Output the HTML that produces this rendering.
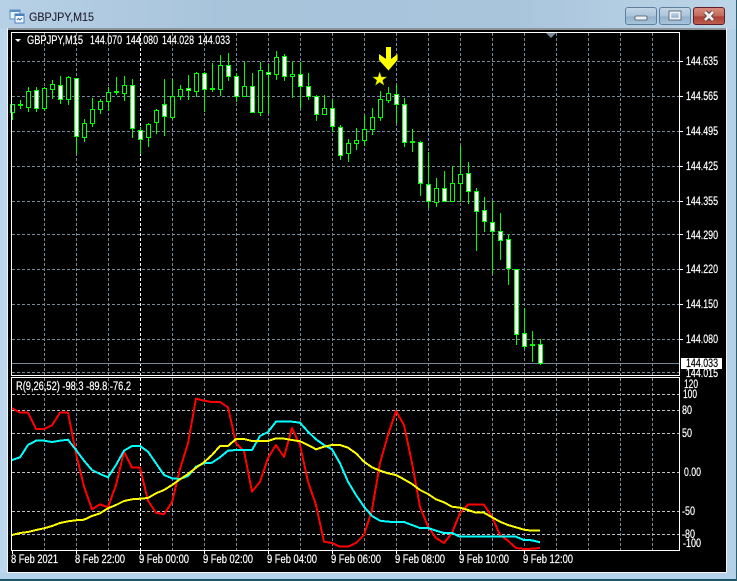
<!DOCTYPE html>
<html>
<head>
<meta charset="utf-8">
<style>
html,body{margin:0;padding:0;background:#b9d2e6;width:737px;height:581px;overflow:hidden}
svg{display:block;position:absolute;left:0;top:0}
text{font-family:"Liberation Sans",sans-serif;font-size:11.5px;fill:#fff;stroke:#fff;stroke-width:.2px}
.t{font-size:12px;fill:#1c1c2c;stroke:#1c1c2c;stroke-width:.1px}
.k{fill:#000;stroke:#000}
</style>
</head>
<body>
<svg width="737" height="581" viewBox="0 0 737 581" xmlns="http://www.w3.org/2000/svg">
<defs>
<linearGradient id="tb" x1="0" y1="0" x2="1" y2="0"><stop offset="0" stop-color="#b7d0e6"/><stop offset=".3" stop-color="#a8c4db"/><stop offset=".7" stop-color="#a9c5dc"/><stop offset="1" stop-color="#bdd5e8"/></linearGradient>
<linearGradient id="bn" x1="0" y1="0" x2="0" y2="1"><stop offset="0" stop-color="#c3d6e6"/><stop offset=".5" stop-color="#aac4db"/><stop offset=".55" stop-color="#92b0cb"/><stop offset="1" stop-color="#a9c6de"/></linearGradient>
<linearGradient id="cl" x1="0" y1="0" x2="0" y2="1"><stop offset="0" stop-color="#d98e80"/><stop offset=".5" stop-color="#c46a5a"/><stop offset=".55" stop-color="#ab4034"/><stop offset="1" stop-color="#bf6050"/></linearGradient>
</defs>
<!-- window frame -->
<rect width="737" height="581" fill="url(#tb)"/>
<rect x="0" y="29" width="8" height="552" fill="#bcd6ee"/>
<rect x="727" y="29" width="9" height="552" fill="#b6d0e8"/>
<rect x="0" y="573" width="737" height="6" fill="#b6d2ea"/>
<rect x="0" y="579" width="737" height="2" fill="#1d5566"/>
<rect x="736" y="0" width="1" height="581" fill="#2a5f70"/>
<rect x="7" y="28" width="720" height="545" fill="#f2f5f8"/>
<rect x="8" y="28" width="718" height="2" fill="#8b9298"/>
<rect x="8" y="30" width="718" height="542" fill="#000"/>
<!-- title icon -->
<g shape-rendering="crispEdges">
<rect x="10" y="10" width="10" height="9" fill="#eaf3fb" stroke="#5b8fc9"/>
<rect x="10" y="10" width="10" height="2" fill="#5b8fc9"/>
<rect x="15" y="14" width="9" height="9" fill="#f4f9fd" stroke="#4a80c0"/>
<rect x="15" y="14" width="9" height="2" fill="#4a80c0"/>
</g>
<path d="M17 20l1.500-1.500 1.500 1.500 2-2" fill="none" stroke="#3a70b0"/>
<text class="t" x="29" y="21" textLength="65" lengthAdjust="spacingAndGlyphs">GBPJPY,M15</text>
<!-- buttons -->
<rect x="625.500" y="7.500" width="31" height="17" rx="2.500" fill="url(#bn)" stroke="#5f7f9b"/>
<rect x="635" y="16" width="12" height="4" rx="1" fill="#eef2f6" stroke="#46525f" stroke-width=".8"/>
<rect x="659.500" y="7.500" width="31" height="17" rx="2.500" fill="url(#bn)" stroke="#5f7f9b"/>
<rect x="670" y="12" width="10" height="7" fill="none" stroke="#eef2f6" stroke-width="2.500"/>
<rect x="669" y="11" width="12" height="9" fill="none" stroke="#46525f" stroke-width=".8"/>
<rect x="693.500" y="7.500" width="31" height="17" rx="2.500" fill="url(#cl)" stroke="#5d2028"/>
<path d="M705 12l8 8M713 12l-8 8" stroke="#4c3a3c" stroke-width="4.500"/>
<path d="M705 12l8 8M713 12l-8 8" stroke="#f1eeee" stroke-width="2.800"/>
<!-- plot frames -->
<g shape-rendering="crispEdges">
<g fill="none" stroke="#778899" stroke-dasharray="3 2">
<path d="M12 61.500H679M12 96.500H679M12 131.500H679M12 166.500H679M12 201.500H679M12 234.500H679M12 269.500H679M12 304.500H679M12 339.500H679M12 372.500H679"/>
<path d="M44.500 33V375M76.500 33V375M108.500 33V375M172.500 33V375M204.500 33V375M236.500 33V375M268.500 33V375M300.500 33V375M332.500 33V375M364.500 33V375M396.500 33V375M428.500 33V375M460.500 33V375M492.500 33V375M524.500 33V375M556.500 33V375M588.500 33V375M620.500 33V375M652.500 33V375"/>
<path d="M44.500 378V550M76.500 378V550M108.500 378V550M172.500 378V550M204.500 378V550M236.500 378V550M268.500 378V550M300.500 378V550M332.500 378V550M364.500 378V550M396.500 378V550M428.500 378V550M460.500 378V550M492.500 378V550M524.500 378V550M556.500 378V550M588.500 378V550M620.500 378V550M652.500 378V550"/>
</g>
<path d="M12 394.500H679M12 410.500H679M12 433.500H679M12 472.500H679M12 511.500H679M12 534.500H679" fill="none" stroke="#c0c0c0" stroke-dasharray="3 2"/>
<path d="M140.500 33V375M140.500 378V550" fill="none" stroke="#fff" stroke-dasharray="3 2"/>
<rect x="12" y="363" width="667" height="1" fill="#778899"/>
<!-- wicks -->
<path fill="none" stroke="#00ff00" d="M12.500 104V120M20.500 100V109M28.500 87V112M36.500 87V112M44.500 87V111M52.500 80V99M60.500 76V104M68.500 76V105M76.500 78V154M84.500 119V142M92.500 98V127M100.500 99V114M108.500 87V111M116.500 77V95M124.500 76V101M132.500 79V138M140.500 127V154M148.500 123V147M156.500 109V134M164.500 79V136M172.500 79V119M180.500 85V100M188.500 75V100M196.500 72V97M204.500 72V112M212.500 63V92M220.500 55V96M228.500 53V81M236.500 73V102M244.500 62V96M252.500 73V113M260.500 62V116M268.500 64V114M276.500 51V80M284.500 54V81M292.500 62V98M300.500 62V108M308.500 73V100M316.500 95V121M324.500 95V114M332.500 99V132M340.500 125V160M348.500 139V162M356.500 128V150M364.500 115V146M372.500 108V135M380.500 91V121M388.500 87V103M396.500 85V123M404.500 98V147M412.500 129V152M420.500 141V196M428.500 152V208M436.500 178V207M444.500 171V201M452.500 166V201M460.500 146V202M468.500 162V204M476.500 188V251M484.500 197V232M492.500 201V274M500.500 213V260M508.500 234V285M516.500 269V345M524.500 308V349M532.500 331V362M540.500 339V365"/>
<!-- doji -->
<path fill="none" stroke="#00ff00" stroke-width="2" d="M18 105H23M114 92H119M210 89H215M410 142H415M530 345H535"/>
<!-- hollow bodies -->
<path fill="#000" stroke="#00ff00" d="M10.500 104.500h4V112.500h-4zM26.500 91.500h4V107.500h-4zM42.500 88.500h4V108.500h-4zM50.500 84.500h4V89.500h-4zM66.500 77.500h4V99.500h-4zM82.500 123.500h4V137.500h-4zM90.500 109.500h4V123.500h-4zM98.500 101.500h4V109.500h-4zM106.500 92.500h4V101.500h-4zM122.500 85.500h4V93.500h-4zM146.500 124.500h4V137.500h-4zM154.500 110.500h4V122.500h-4zM170.500 96.500h4V117.500h-4zM178.500 89.500h4V96.500h-4zM194.500 73.500h4V91.500h-4zM218.500 65.500h4V89.500h-4zM242.500 86.500h4V96.500h-4zM258.500 70.500h4V112.500h-4zM274.500 57.500h4V74.500h-4zM290.500 74.500h4V76.500h-4zM322.500 108.500h4V114.500h-4zM346.500 143.500h4V153.500h-4zM354.500 140.500h4V143.500h-4zM362.500 129.500h4V140.500h-4zM370.500 117.500h4V129.500h-4zM378.500 99.500h4V117.500h-4zM386.500 93.500h4V100.500h-4zM434.500 188.500h4V202.500h-4zM450.500 183.500h4V201.500h-4zM458.500 174.500h4V183.500h-4z"/>
<!-- filled bodies -->
<path fill="#fff" stroke="#00ff00" d="M34.500 90.500h4V108.500h-4zM58.500 85.500h4V99.500h-4zM74.500 78.500h4V136.500h-4zM130.500 85.500h4V128.500h-4zM138.500 130.500h4V139.500h-4zM162.500 104.500h4V116.500h-4zM186.500 88.500h4V90.500h-4zM202.500 73.500h4V89.500h-4zM226.500 65.500h4V76.500h-4zM234.500 76.500h4V96.500h-4zM250.500 86.500h4V112.500h-4zM266.500 72.500h4V74.500h-4zM282.500 56.500h4V76.500h-4zM298.500 74.500h4V86.500h-4zM306.500 86.500h4V96.500h-4zM314.500 96.500h4V114.500h-4zM330.500 108.500h4V126.500h-4zM338.500 127.500h4V155.500h-4zM394.500 94.500h4V104.500h-4zM402.500 104.500h4V142.500h-4zM418.500 142.500h4V183.500h-4zM426.500 184.500h4V201.500h-4zM442.500 188.500h4V201.500h-4zM466.500 173.500h4V191.500h-4zM474.500 191.500h4V211.500h-4zM482.500 210.500h4V221.500h-4zM490.500 222.500h4V231.500h-4zM498.500 231.500h4V240.500h-4zM506.500 239.500h4V268.500h-4zM514.500 269.500h4V334.500h-4zM522.500 333.500h4V346.500h-4zM538.500 344.500h4V363.500h-4z"/>
</g>
<!-- indicator lines -->
<g fill="none" stroke-width="2" stroke-linejoin="round" shape-rendering="crispEdges">
<polyline stroke="#ff0000" points="12,408 20,412.700 28,412.700 36,429 44,429 52,425.300 60,412.700 68,412.700 76,453.300 84,486.700 92,509.300 100,504.300 108,507.300 116,485 124,451.700 132,467.700 140,467.700 148,500.700 156,512.700 164,514.300 172,502.300 180,469 188,443.300 196,398.700 204,400.700 212,402 220,402 228,407.300 236,443.300 244,451 252,491.700 260,481.700 268,458 276,445 284,457 292,428 300,445 308,481.700 316,505 324,541.700 332,543 340,546.700 348,546.700 356,543 364,535 372,510 380,463 388,435 396,411 404,425 412,463 420,506.700 428,526.700 436,538 444,543 452,533 460,513 468,504.700 476,504.700 484,504.700 492,516.700 500,535 508,540.700 516,548 524,549 532,548.700 540,548"/>
<polyline stroke="#00ffff" points="12,460 20,457.300 28,445 36,440.700 44,440.700 52,442 60,440.700 68,439.700 76,450 84,460.700 92,470 100,474 108,477.300 116,465 124,450.700 132,446 140,446 148,451.700 156,463.300 164,475 172,478.300 180,479 188,476 196,466.700 204,463.300 212,462.700 220,457.300 228,450.700 236,450 244,450 252,450 260,436 268,432 276,421.700 284,421.700 292,421.700 300,422.700 308,431.700 316,439.300 324,445 332,449.300 340,463.300 348,481.700 356,495 364,506.700 372,516 380,520.700 388,521.700 396,522 404,522 412,525 420,528 428,528 436,530.700 444,533 452,533 460,536.700 468,536.700 476,536.700 484,536.700 492,536.700 500,536.700 508,536.700 516,536.700 524,540 532,540.300 540,542.300"/>
<polyline stroke="#ffff00" points="12,535 20,533 28,532 36,530 44,528.300 52,526 60,523 68,521.300 76,520.300 84,519.700 92,516 100,513.300 108,508.300 116,505 124,501 132,499.300 140,498.700 148,498 156,493.300 164,490 172,485 180,479.300 188,474 196,467.700 204,462.300 212,455 220,446 228,446 236,439 244,439 252,441 260,441 268,441 276,438.300 284,438.700 292,440 300,441.300 308,445 316,449.300 324,446.700 332,445 340,445 348,447.700 356,453.300 364,461.700 372,467.300 380,470.700 388,473.300 396,475 404,479.300 412,484 420,490 428,494 436,499.300 444,502.300 452,506.700 460,507.700 468,510 476,512.700 484,512.700 492,517.300 500,521.700 508,525 516,527.300 524,529.700 532,530.700 540,530.700"/>
</g>
<!-- arrow and star -->
<polygon fill="#ffff00" points="386,47 391,47 391,59 397.500,54 397.500,60 388.500,70.500 379,60 379,54 386,59"/>
<polygon fill="#ffff00" stroke="#7a9a00" stroke-width=".5" points="379.700,72 381.400,77 386.700,77 382.500,80.200 384,85.300 379.700,82.200 375.400,85.300 376.900,80.200 372.700,77 378,77"/>
<!-- chart frame lines -->
<g shape-rendering="crispEdges" fill="#fff">
<rect x="11" y="32" width="669" height="1"/>
<rect x="11" y="32" width="1" height="344"/>
<rect x="679" y="32" width="1" height="344"/>
<rect x="11" y="375" width="669" height="1"/>
<rect x="11" y="377" width="668" height="1"/>
<rect x="11" y="377" width="1" height="174"/>
<rect x="679" y="377" width="1" height="174"/>
<rect x="11" y="550" width="669" height="1"/>
<path d="M680 61h3v1h-3zM680 96h3v1h-3zM680 131h3v1h-3zM680 166h3v1h-3zM680 201h3v1h-3zM680 234h3v1h-3zM680 269h3v1h-3zM680 304h3v1h-3zM680 339h3v1h-3z"/>
<path d="M12 551h1v3h-1zM76 551h1v3h-1zM140 551h1v3h-1zM204 551h1v3h-1zM268 551h1v3h-1zM332 551h1v3h-1zM396 551h1v3h-1zM460 551h1v3h-1zM524 551h1v3h-1z"/>
</g>
<polygon points="546,33 556,33 551,38" fill="#778899"/>
<polygon points="15,39 21,39 18,42" fill="#fff"/>
<!-- legend -->
<text x="27" y="44" textLength="56" lengthAdjust="spacingAndGlyphs">GBPJPY,M15</text>
<text x="90" y="44" textLength="32" lengthAdjust="spacingAndGlyphs">144.070</text>
<text x="126" y="44" textLength="32" lengthAdjust="spacingAndGlyphs">144.080</text>
<text x="162" y="44" textLength="32" lengthAdjust="spacingAndGlyphs">144.028</text>
<text x="198" y="44" textLength="32" lengthAdjust="spacingAndGlyphs">144.033</text>
<text x="16" y="390" textLength="115" lengthAdjust="spacingAndGlyphs">R(9,26,52) -98.3 -89.8 -76.2</text>
<!-- price axis -->
<text x="686" y="65" textLength="32" lengthAdjust="spacingAndGlyphs">144.635</text>
<text x="686" y="100" textLength="32" lengthAdjust="spacingAndGlyphs">144.565</text>
<text x="686" y="135" textLength="32" lengthAdjust="spacingAndGlyphs">144.495</text>
<text x="686" y="170" textLength="32" lengthAdjust="spacingAndGlyphs">144.425</text>
<text x="686" y="205" textLength="32" lengthAdjust="spacingAndGlyphs">144.355</text>
<text x="686" y="239" textLength="32" lengthAdjust="spacingAndGlyphs">144.290</text>
<text x="686" y="273" textLength="32" lengthAdjust="spacingAndGlyphs">144.220</text>
<text x="686" y="308" textLength="32" lengthAdjust="spacingAndGlyphs">144.150</text>
<text x="686" y="343" textLength="32" lengthAdjust="spacingAndGlyphs">144.080</text>
<text x="686" y="377" textLength="32" lengthAdjust="spacingAndGlyphs">144.015</text>
<rect x="681" y="358" width="41" height="11" fill="#fff"/>
<text class="k" x="686" y="367" textLength="32" lengthAdjust="spacingAndGlyphs">144.033</text>
<!-- indicator axis -->
<text x="684" y="388" textLength="14" lengthAdjust="spacingAndGlyphs">120</text>
<text x="683" y="398" textLength="14" lengthAdjust="spacingAndGlyphs">100</text>
<text x="682" y="414" textLength="10" lengthAdjust="spacingAndGlyphs">80</text>
<text x="682" y="437" textLength="10" lengthAdjust="spacingAndGlyphs">50</text>
<text x="684" y="476" textLength="17" lengthAdjust="spacingAndGlyphs">0.00</text>
<text x="682" y="515" textLength="13" lengthAdjust="spacingAndGlyphs">-50</text>
<text x="682" y="538" textLength="13" lengthAdjust="spacingAndGlyphs">-80</text>
<text x="683" y="547" textLength="18" lengthAdjust="spacingAndGlyphs">-100</text>
<!-- time axis -->
<text x="11" y="563" textLength="47" lengthAdjust="spacingAndGlyphs">8 Feb 2021</text>
<text x="75" y="563" textLength="50" lengthAdjust="spacingAndGlyphs">8 Feb 22:00</text>
<text x="139" y="563" textLength="50" lengthAdjust="spacingAndGlyphs">9 Feb 00:00</text>
<text x="203" y="563" textLength="50" lengthAdjust="spacingAndGlyphs">9 Feb 02:00</text>
<text x="267" y="563" textLength="50" lengthAdjust="spacingAndGlyphs">9 Feb 04:00</text>
<text x="331" y="563" textLength="50" lengthAdjust="spacingAndGlyphs">9 Feb 06:00</text>
<text x="395" y="563" textLength="50" lengthAdjust="spacingAndGlyphs">9 Feb 08:00</text>
<text x="459" y="563" textLength="50" lengthAdjust="spacingAndGlyphs">9 Feb 10:00</text>
<text x="523" y="563" textLength="50" lengthAdjust="spacingAndGlyphs">9 Feb 12:00</text>
</svg>
</body>
</html>
